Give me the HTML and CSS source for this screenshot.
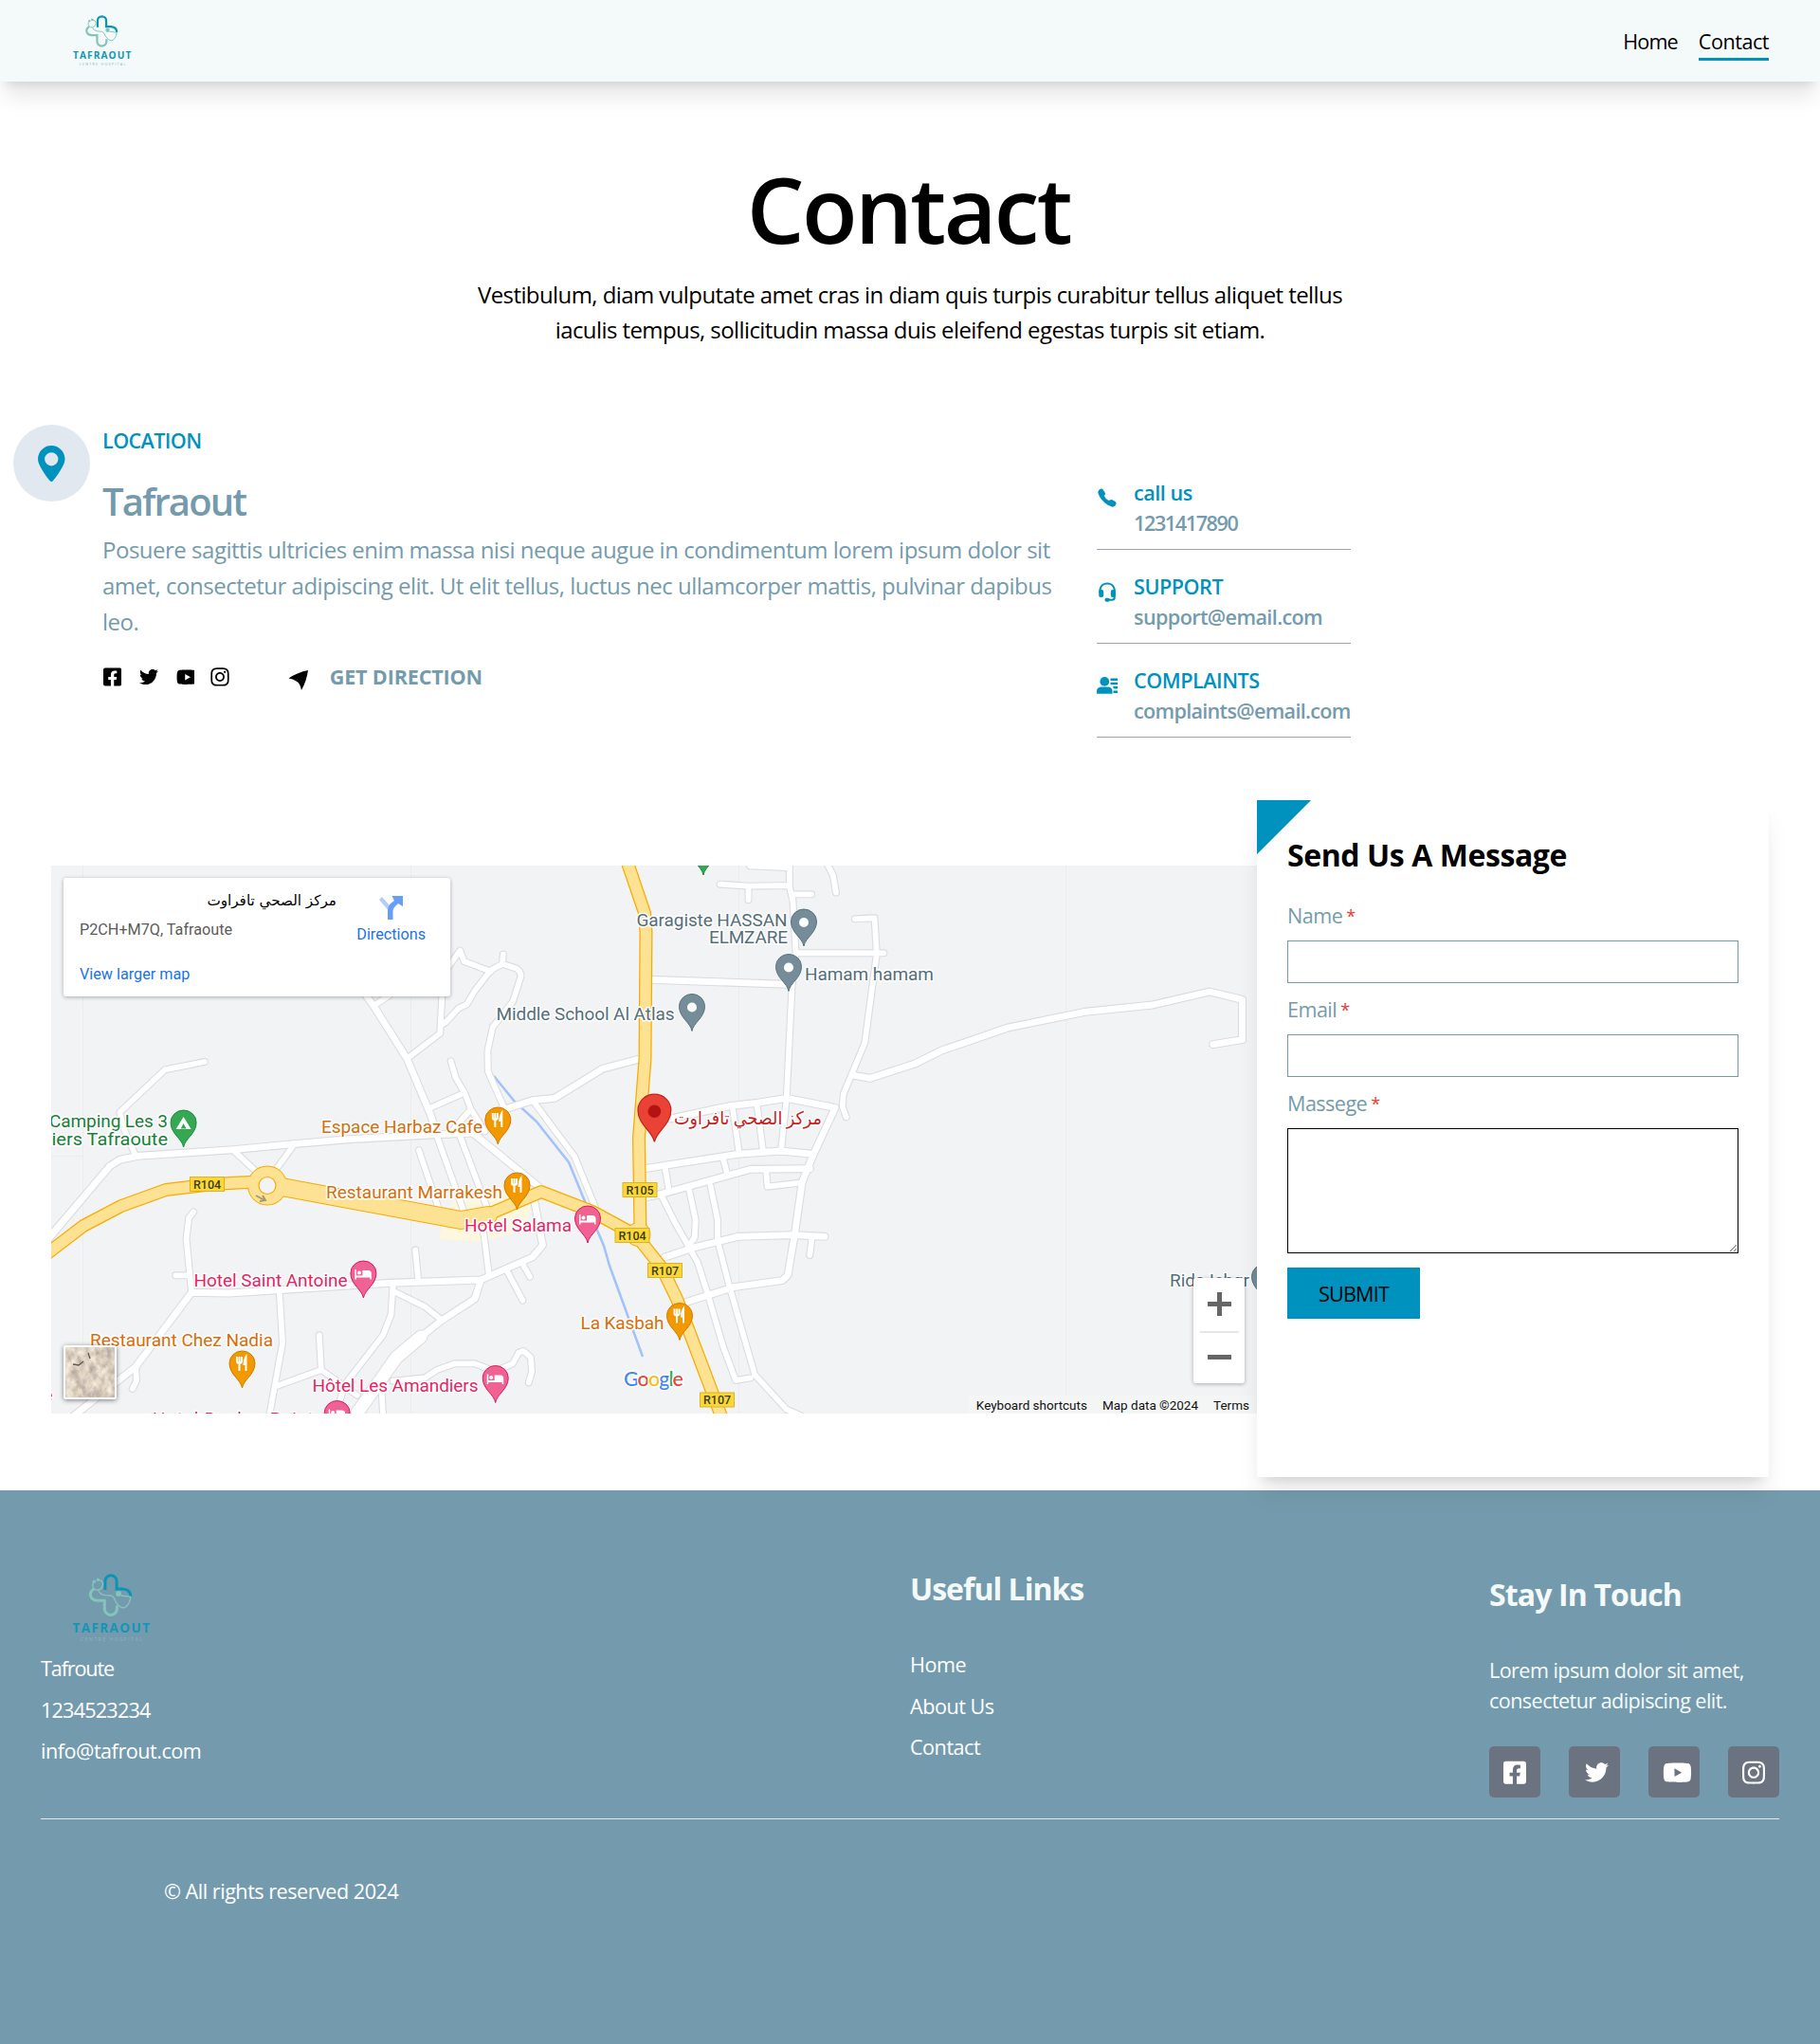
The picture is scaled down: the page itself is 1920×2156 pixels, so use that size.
FILE: index.html
```html
<!DOCTYPE html>
<html lang="en">
<head>
<meta charset="utf-8">
<title>Contact</title>
<link rel="stylesheet" href="styles.css">
</head>
<body>
<svg class="sprite" aria-hidden="true">
  <symbol id="logo" viewBox="225 85 255 225">
    <g fill="none" stroke-linecap="butt">
      <path stroke="#0c93b5" stroke-width="9" d="M334 140V112A18.500 18.500 0 0 1 371 112V137H392Q416 139 416 161"/>
      <path stroke="#84c5bb" stroke-width="9" d="M298 136Q280 150 290 165Q297 174 310 174H332V200A20 20 0 0 0 372 200V190"/>
      <path stroke="#84c5bb" stroke-width="4" d="M300 110Q286 130 304 140Q325 142 327 122Q326 108 312 108M312 142Q318 155 335 157L352 158Q362 160 368 178Q380 198 395 197Q412 190 416 162L385 158"/>
    </g>
    <g fill="#84c5bb"><circle cx="377" cy="152" r="9"/><circle cx="299" cy="113" r="5"/><circle cx="311" cy="107" r="5"/></g>
    <text x="229" y="276" class="logo-name" textLength="248">TAFRAOUT</text>
    <text x="255" y="303" class="logo-sub" textLength="198">CENTRE HOSPITAL</text>
  </symbol>
  <symbol id="fb" viewBox="0 0 448 512"><path d="M400 32H48A48 48 0 0 0 0 80v352a48 48 0 0 0 48 48h137.250V327.690h-63V256h63v-54.640c0-62.150 37-96.480 93.670-96.480 27.140 0 55.520 4.840 55.520 4.840v61h-31.270c-30.810 0-40.420 19.120-40.420 38.730V256h68.780l-11 71.690h-57.780V480H400a48 48 0 0 0 48-48V80a48 48 0 0 0-48-48z"/></symbol>
  <symbol id="tw" viewBox="0 0 512 512"><path d="M459.370 151.716c.325 4.548.325 9.097.325 13.645 0 138.720-105.583 298.558-298.558 298.558-59.452 0-114.680-17.219-161.137-47.106 8.447.974 16.568 1.299 25.340 1.299 49.055 0 94.213-16.568 130.274-44.832-46.132-.975-84.792-31.188-98.112-72.772 6.498.974 12.995 1.624 19.818 1.624 9.421 0 18.843-1.300 27.614-3.573-48.081-9.747-84.143-51.980-84.143-102.985v-1.299c13.969 7.797 30.214 12.670 47.431 13.319-28.264-18.843-46.781-51.005-46.781-87.391 0-19.492 5.197-37.360 14.294-52.954 51.655 63.675 129.300 105.258 216.365 109.807-1.624-7.797-2.599-15.918-2.599-24.040 0-57.828 46.782-104.934 104.934-104.934 30.213 0 57.502 12.670 76.670 33.137 23.715-4.548 46.456-13.320 66.599-25.340-7.798 24.366-24.366 44.833-46.132 57.827 21.117-2.273 41.584-8.122 60.426-16.243-14.292 20.791-32.161 39.308-52.628 54.253z"/></symbol>
  <symbol id="yt" viewBox="0 0 576 512"><path d="M549.655 124.083c-6.281-23.650-24.787-42.276-48.284-48.597C458.781 64 288 64 288 64S117.220 64 74.629 75.486c-23.497 6.322-42.003 24.947-48.284 48.597-11.412 42.867-11.412 132.305-11.412 132.305s0 89.438 11.412 132.305c6.281 23.650 24.787 41.500 48.284 47.821C117.220 448 288 448 288 448s170.780 0 213.371-11.486c23.497-6.321 42.003-24.171 48.284-47.821 11.412-42.867 11.412-132.305 11.412-132.305s0-89.438-11.412-132.305zm-317.510 213.508V175.185l142.739 81.205-142.739 81.201z"/></symbol>
  <symbol id="ig" viewBox="0 0 448 512"><path d="M224.100 141c-63.600 0-114.900 51.300-114.900 114.900s51.300 114.900 114.900 114.900S339 319.500 339 255.900 287.700 141 224.100 141zm0 189.600c-41.100 0-74.700-33.500-74.700-74.700s33.500-74.700 74.700-74.700 74.700 33.500 74.700 74.700-33.600 74.700-74.700 74.700zm146.400-194.300c0 14.900-12 26.800-26.800 26.800-14.900 0-26.800-12-26.800-26.800s12-26.800 26.800-26.800 26.800 12 26.800 26.800zm76.100 27.200c-1.700-35.900-9.900-67.700-36.200-93.900-26.200-26.200-58-34.400-93.900-36.200-37-2.100-147.900-2.100-184.900 0-35.800 1.700-67.600 9.900-93.900 36.100s-34.400 58-36.200 93.900c-2.100 37-2.100 147.900 0 184.900 1.700 35.900 9.900 67.700 36.200 93.900s58 34.400 93.900 36.200c37 2.100 147.900 2.100 184.900 0 35.900-1.700 67.700-9.900 93.900-36.200 26.200-26.200 34.400-58 36.200-93.900 2.100-37 2.100-147.800 0-184.800zM398.800 388c-7.800 19.600-22.900 34.700-42.600 42.600-29.500 11.700-99.500 9-132.100 9s-102.700 2.600-132.100-9c-19.600-7.800-34.700-22.900-42.600-42.600-11.700-29.500-9-99.500-9-132.100s-2.600-102.700 9-132.100c7.800-19.600 22.900-34.700 42.600-42.600 29.500-11.700 99.500-9 132.100-9s102.700-2.600 132.100 9c19.600 7.800 34.700 22.900 42.600 42.600 11.700 29.500 9 99.500 9 132.100s2.700 102.700-9 132.100z"/></symbol>
  <symbol id="pin-shape" viewBox="-16 -42 32 44" overflow="visible"><path d="M0 0C-1.500-9-13.500-14-13.500-26A13.500 13 0 1 1 13.500-26C13.500-14 1.500-9 0 0Z"/></symbol>
</svg>

<header class="topbar">
  <svg class="topbar-logo"><use href="#logo"/></svg>
  <nav class="nav">
    <a>Home</a>
    <a class="active">Contact</a>
  </nav>
</header>

<main>
  <section class="intro">
    <h1>Contact</h1>
    <p>Vestibulum, diam vulputate amet cras in diam quis turpis curabitur tellus aliquet tellus<br>iaculis tempus, sollicitudin massa duis eleifend egestas turpis sit etiam.</p>
  </section>

  <section class="info">
    <div class="badge"><svg viewBox="0 0 384 512"><path d="M215.700 499.200C267 435 384 279.400 384 192C384 86 298 0 192 0S0 86 0 192c0 87.400 117 243 168.300 307.200c12.300 15.300 35.100 15.300 47.400 0zM192 288a96 96 0 1 1 0-192 96 96 0 1 1 0 192z"/></svg></div>
    <div class="place">
      <h4>LOCATION</h4>
      <h2>Tafraout</h2>
      <p>Posuere sagittis ultricies enim massa nisi neque augue in condimentum lorem ipsum dolor sit<br>amet, consectetur adipiscing elit. Ut elit tellus, luctus nec ullamcorper mattis, pulvinar dapibus<br>leo.</p>
      <div class="links">
        <svg class="s-fb"><use href="#fb"/></svg>
        <svg class="s-tw"><use href="#tw"/></svg>
        <svg class="s-yt" viewBox="0 0 490 512"><use href="#yt" width="576" height="512"/></svg>
        <svg class="s-ig"><use href="#ig"/></svg>
        <svg class="s-dir" viewBox="0 0 21 21"><path d="M0.500 8.500Q10 2 21 0Q19.500 11 14 21Q12.500 13 8.500 11.500Q5 9 .5 8.500Z"/></svg>
        <a>GET DIRECTION</a>
      </div>
    </div>
    <ul class="contacts">
      <li>
        <svg viewBox="0 0 512 512"><path d="M391 480c-19.520 0-46.940-7.060-88-30-49.930-28-88.550-53.850-138.210-103.380C116.910 298.770 93.610 267.790 61 208.450c-36.840-67-30.560-102.120-23.540-117.130C45.820 73.380 58.160 62.650 74.110 52a176.300 176.300 0 0 1 28.640-15.200c1-.43 1.930-.84 2.760-1.210 4.950-2.230 12.450-5.600 21.950-2 6.340 2.380 12 7.250 20.860 16 18.170 17.920 43 57.830 52.160 77.430 6.150 13.210 10.220 21.930 10.230 31.710 0 11.450-5.760 20.280-12.750 29.810-1.310 1.790-2.610 3.500-3.870 5.160-7.610 10-9.280 12.890-8.180 18.050 2.230 10.370 18.860 41.240 46.190 68.510s57.310 42.850 67.720 45.070c5.380 1.150 8.330-.59 18.650-8.470 1.480-1.130 3-2.300 4.590-3.470 10.660-7.930 19.080-13.540 30.260-13.540h.06c9.730 0 18.060 4.220 31.860 11.180 18 9.080 59.110 33.590 77.140 51.780 8.770 8.840 13.660 14.480 16.050 20.810 3.600 9.530.21 17-2 22-.37.830-.78 1.740-1.210 2.750a176.490 176.490 0 0 1-15.290 28.580c-10.630 15.900-21.400 28.210-39.380 36.580A67.420 67.420 0 0 1 391 480z"/></svg>
        <div><b>call us</b><span class="digits">1231417890</span></div>
      </li>
      <li>
        <svg viewBox="0 0 22 22"><path d="M3.500 12V8.500A7.700 7.200 0 0 1 18.700 8.500V17.500Q18.700 19.700 16 19.700H12" fill="none" stroke="#0092bf" stroke-width="2.100"/><rect x="2.200" y="9" width="5" height="8" rx="2"/><rect x="14.800" y="9" width="5" height="8" rx="2"/><rect x="8.400" y="17.800" width="5.500" height="4" rx="2"/></svg>
        <div><b>SUPPORT</b><span>support@email.com</span></div>
      </li>
      <li>
        <svg viewBox="0 0 22 22"><circle cx="8.300" cy="6.900" r="4.900"/><path d="M0 19.700V17Q0 12.500 5.500 12.500H11Q16.500 12.500 16.500 17V19.700Z"/><path d="M14.500 3.500H22V6H14.500ZM14.500 7.700H22V10.200H14.500ZM17 12H22V14.500H18ZM17.500 16.500H22V19H17.500Z"/></svg>
        <div><b>COMPLAINTS</b><span class="snug">complaints@email.com</span></div>
      </li>
    </ul>
  </section>

  <section class="reach">
    <div class="map">
      <svg class="map-canvas" viewBox="54 913 1272 578" preserveAspectRatio="none">
        <defs>
          <g id="lanes">
            <g transform="translate(40 900) scale(.42092 .33333)">
              <path d="M1025 365L1058 308L1068 342L1135 374M1166 320L1164 350L1135 370L1095 435L1075 478L1055 490L1022 535L1010 545M1164 350L1200 365Q1215 380 1208 400L1190 470L1140 550L1127 625L1128 690L1170 810M1013 445L1008 570L930 645M845 480L880 450M418 660L318 685L205 820L215 870L245 958M985 805L1065 760M1035 658L1047 710L1070 760L1085 810L1120 880M1085 810L1030 890M1240 782L1345 960L1400 1130"/>
            </g>
            <g transform="translate(40 1190) scale(.42092 .33333)">
              <path d="M490 70L545 135M640 55L600 125M390 265L378 285L372 350L385 520M345 466L375 466M245 755L247 800L237 825M605 512L613 680L580 910M600 815L710 765L705 655M710 765L800 845M890 495L885 590L865 655L770 810L755 870M890 515L970 565L1010 605M890 800L970 790L1000 765L1045 745L1095 745L1145 770L1190 745L1205 710L1217 705L1235 725L1238 770L1230 805M862 840L865 910M946 385L953 480M955 70L1003 250M1000 25L1068 265M1055 15L1125 250M1115 310L1130 460M1175 450L1215 545M1215 430L1233 470M30 340L180 120L205 100"/>
            </g>
            <g transform="translate(640 900) scale(.44643 .33333)">
              <path d="M338 40L425 45M268 98L335 104L432 102M335 104L335 148M440 130L484 130M520 30L535 70L542 125M587 208L633 205L638 320L610 600L560 760L557 800L566 835M450 315L655 316M432 30L432 105L440 150L447 315L438 420L425 775L412 945M297 800L313 950M355 795L370 945"/>
            </g>
            <g transform="translate(640 1190) scale(.44643 .33333)">
              <path d="M275 95L285 145M138 125L147 195M377 140L380 185L462 172M130 215L160 295L215 425L240 530L275 690L305 798L340 790M195 195L210 290L208 345L195 370M245 180L262 290L262 355L290 500L350 780L425 890L460 910M485 345L480 402"/>
            </g>
          </g>
          <g id="streets">
            <g transform="translate(40 900) scale(.42092 .33333)">
              <path d="M820 445L845 490L925 650L985 830L1000 890M1170 810L1240 782L1295 775L1415 682L1505 652"/>
            </g>
            <g transform="translate(40 1190) scale(.42092 .33333)">
              <path d="M30 345L180 120L205 100L250 88L490 68L640 50L780 35L1000 20L1090 15L1255 185M90 910L190 810L245 755L385 520L480 522L605 512L880 490L1110 480L1240 408L1265 370L1245 235M1110 480L1095 540L1010 610L960 660"/>
            </g>
            <g transform="translate(640 900) scale(.44643 .33333)">
              <path d="M103 400L430 415M580 702L623 712L730 665L790 625L948 552L1130 502L1290 480L1425 438L1502 463L1502 590L1433 605M150 840L290 800L355 790L425 775L540 805L488 955L462 1040L445 1200L428 1335L415 1352L300 1373L190 1420"/>
            </g>
            <g transform="translate(640 1190) scale(.44643 .33333)">
              <path d="M90 128L310 82L410 72L488 82M95 218L130 208L340 130L480 128M138 408L200 380L310 343L440 338L515 343"/>
            </g>
          </g>
          <path id="avenue" d="M444 1410L418 1432L377 1490"/>
          <g id="road">
            <path d="M50 1322L88 1293L128 1272L175 1255L225 1249L270 1246.500"/>
            <path d="M515 1281L571 1257L625 1278L671 1303L698 1337L714 1370L761 1494"/>
            <path d="M662 910L680 963L681.500 983L680.500 1117L674 1200L675.500 1300"/>
          </g>
          <path id="highway" d="M292 1251L486 1287L515 1282"/>
        </defs>
        <rect x="54" y="913" width="1272" height="578" fill="#f1f3f4"/>
        <path d="M87.500 913V1491M433.500 913V1491M779.500 913V1491M1124.500 913V1491M54 1219.500H87" stroke="#eaecee"/>
        <path d="M486 1257L530 1252L560 1270L556 1297L507 1310L463 1307L469 1280Z" fill="#fef7e0"/>
        <path class="river" d="M521 1135L543 1162L566 1183L600 1226L619 1272L637 1314L643 1335L678 1431"/>
        <use href="#lanes" class="lane-edge"/><use href="#streets" class="street-edge"/><use href="#avenue" class="avenue-edge"/>
        <use href="#lanes" class="lane"/><use href="#streets" class="street"/><use href="#avenue" class="avenue"/>
        <use href="#highway" class="highway-edge"/><use href="#road" class="road-edge"/>
        <circle cx="282" cy="1250.500" r="21" fill="#f9ab00"/><circle cx="673.500" cy="1302" r="13" fill="#f9ab00"/>
        <circle cx="282" cy="1250.500" r="20" fill="#fde293"/><circle cx="673.500" cy="1302" r="12" fill="#fde293"/>
        <use href="#highway" class="highway"/><use href="#road" class="road"/>
        <circle cx="282" cy="1250.500" r="9" fill="#f1f3f4" stroke="#f9ab00" stroke-width="1.200"/>
        <path d="M270 1261L279 1266M274 1267L280 1266L277 1261" stroke="#a59a72" stroke-width="2" fill="none"/>

        <g class="shields">
          <rect x="200.500" y="1241.500" width="36" height="15"/><text x="218.500" y="1253.500">R104</text>
          <rect x="657" y="1247.500" width="36" height="15"/><text x="675" y="1259.500">R105</text>
          <rect x="649" y="1295.500" width="36" height="15"/><text x="667" y="1307.500">R104</text>
          <rect x="683.500" y="1332.500" width="36" height="15"/><text x="701.500" y="1344.500">R107</text>
          <rect x="738.500" y="1469" width="36" height="15"/><text x="756.500" y="1481">R107</text>
        </g>

        <g class="labels slate">
          <text x="671.500" y="976.500" textLength="159">Garagiste HASSAN</text><text x="748" y="995.300" textLength="83">ELMZARE</text>
          <text x="849" y="1033.500" textLength="136">Hamam hamam</text><text x="523.500" y="1075.700" textLength="188">Middle School Al Atlas</text>
          <text x="1234" y="1356.500" textLength="84">Rida Ichgr</text>
        </g>
        <g class="labels green"><text x="52" y="1188.500" textLength="125">Camping Les 3</text><text x="37" y="1207.500" textLength="140" lengthAdjust="spacingAndGlyphs">miers Tafraoute</text></g>
        <g class="labels orange">
          <text x="339" y="1195" textLength="170">Espace Harbaz Cafe</text><text x="344" y="1264" textLength="186">Restaurant Marrakesh</text>
          <text x="95" y="1419.700" textLength="193">Restaurant Chez Nadia</text><text x="612.500" y="1401.500" textLength="88">La Kasbah</text>
        </g>
        <g class="labels pink">
          <text x="490" y="1299" textLength="113">Hotel Salama</text><text x="204.500" y="1356.500" textLength="162">Hotel Saint Antoine</text>
          <text x="329.500" y="1467.700" textLength="175">Hôtel Les Amandiers</text><text x="161" y="1502.500" textLength="170">Hotel Rocher Peint</text>
          <text x="45.500" y="1478">e</text>
        </g>
        <text class="labels red" x="789" y="1185.500" text-anchor="middle" textLength="156" lengthAdjust="spacingAndGlyphs">مركز الصحي تافراوت</text>

        <g class="pins">
          <g fill="#748d98" stroke="#5b727d">
            <g transform="translate(848 998)"><use href="#pin-shape" x="-16" y="-42" width="32" height="44"/><circle cy="-25" r="5"/></g>
            <g transform="translate(832 1045.500)"><use href="#pin-shape" x="-16" y="-42" width="32" height="44"/><circle cy="-25" r="5"/></g>
            <g transform="translate(730 1087.500)"><use href="#pin-shape" x="-16" y="-42" width="32" height="44"/><circle cy="-25" r="5"/></g>
            <g transform="translate(1334 1372.500)"><use href="#pin-shape" x="-16" y="-42" width="32" height="44"/></g>
          </g>
          <g fill="#34a853" stroke="#1e8e3e">
            <g transform="translate(193.600 1210)"><use href="#pin-shape" x="-16" y="-42" width="32" height="44"/><path d="M-8-19L0-32L8-19ZM-3-19.500H3L0-25Z" fill="#fff" fill-rule="evenodd" stroke="none"/></g>
            <g transform="translate(742 923)"><use href="#pin-shape" x="-16" y="-42" width="32" height="44"/></g>
          </g>
          <g fill="#f29900" stroke="#d37a00">
            <g transform="translate(525.300 1207)"><use href="#pin-shape" x="-16" y="-42" width="32" height="44"/><path class="fork" d="M-5.500-33V-28Q-5.500-26-3-26V-18M-.5-33V-28Q-.5-26-3-26V-33M4-18V-33Q2-30 2-25H4"/></g>
            <g transform="translate(545.500 1276)"><use href="#pin-shape" x="-16" y="-42" width="32" height="44"/><path class="fork" d="M-5.500-33V-28Q-5.500-26-3-26V-18M-.5-33V-28Q-.5-26-3-26V-33M4-18V-33Q2-30 2-25H4"/></g>
            <g transform="translate(255.500 1464)"><use href="#pin-shape" x="-16" y="-42" width="32" height="44"/><path class="fork" d="M-5.500-33V-28Q-5.500-26-3-26V-18M-.5-33V-28Q-.5-26-3-26V-33M4-18V-33Q2-30 2-25H4"/></g>
            <g transform="translate(717 1413.500)"><use href="#pin-shape" x="-16" y="-42" width="32" height="44"/><path class="fork" d="M-5.500-33V-28Q-5.500-26-3-26V-18M-.5-33V-28Q-.5-26-3-26V-33M4-18V-33Q2-30 2-25H4"/></g>
          </g>
          <g fill="#f06292" stroke="#d81b60">
            <g transform="translate(620 1311)"><use href="#pin-shape" x="-16" y="-42" width="32" height="44"/><path class="bed" d="M-9-30H-7.500V-23.500H-1V-29H5Q8.500-29 8.500-25.500V-19.500H7V-21.500H-7.500V-19.500H-9ZM-6.500-26.500A2 2 0 1 1-2.500-26.500A2 2 0 1 1-6.500-26.500"/></g>
            <g transform="translate(383.400 1369)"><use href="#pin-shape" x="-16" y="-42" width="32" height="44"/><path class="bed" d="M-9-30H-7.500V-23.500H-1V-29H5Q8.500-29 8.500-25.500V-19.500H7V-21.500H-7.500V-19.500H-9ZM-6.500-26.500A2 2 0 1 1-2.500-26.500A2 2 0 1 1-6.500-26.500"/></g>
            <g transform="translate(522.700 1479.500)"><use href="#pin-shape" x="-16" y="-42" width="32" height="44"/><path class="bed" d="M-9-30H-7.500V-23.500H-1V-29H5Q8.500-29 8.500-25.500V-19.500H7V-21.500H-7.500V-19.500H-9ZM-6.500-26.500A2 2 0 1 1-2.500-26.500A2 2 0 1 1-6.500-26.500"/></g>
            <g transform="translate(355.700 1516.500)"><use href="#pin-shape" x="-16" y="-42" width="32" height="44"/><path class="bed" d="M-9-30H-7.500V-23.500H-1V-29H5Q8.500-29 8.500-25.500V-19.500H7V-21.500H-7.500V-19.500H-9ZM-6.500-26.500A2 2 0 1 1-2.500-26.500A2 2 0 1 1-6.500-26.500"/></g>
          </g>
          <g transform="translate(690.400 1204.500) scale(1.290)" fill="#ea4335" stroke="#c5221f"><use href="#pin-shape" x="-16" y="-42" width="32" height="44"/><circle class="core" cy="-25" r="5.300"/></g>
        </g>

        <text class="google" x="658" y="1462" textLength="63"><tspan fill="#4285f4">G</tspan><tspan fill="#ea4335">o</tspan><tspan fill="#fbbc04">o</tspan><tspan fill="#4285f4">g</tspan><tspan fill="#34a853">l</tspan><tspan fill="#ea4335">e</tspan></text>
      </svg>

      <div class="place-card">
        <div class="place-text">
          <strong dir="rtl">مركز الصحي تافراوت</strong>
          <span>P2CH+M7Q, Tafraoute</span>
          <a>View larger map</a>
        </div>
        <div class="place-dir">
          <svg viewBox="0 0 25 26"><path d="M3 2L11 11V16L8.500 15L0 5Z" fill="#b3cdfd"/><path d="M9 26V16Q9 12 12 9L16 6L13.500 1H25V12L20 9L16 13Q14.500 15 14.500 17V26Z" fill="#669df6"/></svg>
          <a>Directions</a>
        </div>
      </div>
      <div class="satellite"><svg viewBox="0 0 52 53" preserveAspectRatio="none">
        <filter id="terrain" x="0" y="0" width="1" height="1">
          <feTurbulence type="fractalNoise" baseFrequency=".12 .09" numOctaves="4" seed="7"/>
          <feColorMatrix values=".9 0 0 0 .25  .85 0 0 0 .19  .7 .1 0 0 .12  0 0 0 0 1"/>
        </filter>
        <rect width="52" height="53" fill="#b3a08c" filter="url(#terrain)"/>
        <path d="M8 18L14 19L19 15M24 6L26 12" fill="none" stroke="#5f564d" stroke-width="1.300"/>
      </svg></div>
      <div class="zoom"><i class="plus"></i><hr><i class="minus"></i></div>
      <div class="credits"><span>Keyboard shortcuts</span><span>Map data ©2024</span><span>Terms</span></div>
    </div>

    <form class="form">
      <h3>Send Us A Message</h3>
      <label>Name <em>*</em></label>
      <input type="text">
      <label>Email <em>*</em></label>
      <input type="text">
      <label>Massege <em>*</em></label>
      <textarea></textarea>
      <button type="button">SUBMIT</button>
    </form>
  </section>
</main>

<footer class="footer">
  <div class="footer-cols">
    <div class="f-brand">
      <svg class="footer-logo"><use href="#logo"/></svg>
      <p class="tight">Tafroute</p>
      <p class="nums">1234523234</p>
      <p>info@tafrout.com</p>
    </div>
    <div class="f-links">
      <h3>Useful Links</h3>
      <a>Home</a>
      <a>About Us</a>
      <a>Contact</a>
    </div>
    <div class="f-social">
      <h3>Stay In Touch</h3>
      <p>Lorem ipsum dolor sit amet,<br>consectetur adipiscing elit.</p>
      <div class="tiles">
        <a><svg class="t-fb"><use href="#fb"/></svg></a>
        <a><svg class="t-tw"><use href="#tw"/></svg></a>
        <a><svg class="t-yt"><use href="#yt"/></svg></a>
        <a><svg class="t-fb"><use href="#ig"/></svg></a>
      </div>
    </div>
  </div>
  <p class="copy">© All rights reserved 2024</p>
</footer>
</body>
</html>
```
FILE: styles.css
```css
* { box-sizing: border-box; margin: 0; padding: 0; }
body {
  font: 400 21.6px/32.4px "Open Sans", "Noto Sans", sans-serif;
  letter-spacing: -0.0225em;
  color: #000;
  background: #fff;
}
svg { display: block; }
.sprite { position: absolute; width: 0; height: 0; }
.logo-name { font: 700 41px "Open Sans", sans-serif; letter-spacing: 0; fill: #1595b5; }
.logo-sub { font: 400 15px "Open Sans", sans-serif; letter-spacing: 0; fill: #84b5c0; }

/* header */
.topbar {
  position: relative;
  display: flex;
  justify-content: space-between;
  height: 86px;
  padding: 0 54px 0 76px;
  background: #f4fafa;
  box-shadow: 0 20px 25px -5px rgba(0, 0, 0, .1), 0 8px 10px -6px rgba(0, 0, 0, .1);
}
.topbar-logo { width: 63px; height: 56px; margin-top: 15px; }
.nav { display: flex; gap: 22px; padding-top: 28px; }
.nav a { height: 36px; border-bottom: 3px solid transparent; }
.nav a:first-child { letter-spacing: -0.04em; }
.nav .active { border-color: #0092bf; }

/* intro */
.intro { padding-top: 86px; height: 362px; text-align: center; }
.intro h1 { padding-right: 3px; font-size: 96px; line-height: 96px; font-weight: 600; letter-spacing: -0.0273em; margin-bottom: 24px; }
.intro p { font-size: 24px; line-height: 37px; letter-spacing: -0.0242em; }

/* location and contact details */
.info {
  display: grid;
  grid-template-columns: 80px 1048px 268px;
  padding-left: 14px;
  height: 396px;
}
.badge { display: flex; align-items: center; justify-content: center; width: 81px; height: 81px; border-radius: 50%; background: #e2e8f0; }
.badge svg { width: 28.500px; height: 38px; fill: #0092bf; }
.place { padding: 1px 0 0 14px; color: #749bad; white-space: nowrap; }
.place h4 { font-size: 21.6px; line-height: 32px; font-weight: 600; letter-spacing: -0.028em; color: #0092bf; margin-bottom: 28px; }
.place h2 { font-size: 40px; line-height: 40px; font-weight: 600; letter-spacing: -0.048em; margin-bottom: 12px; }
.place p { font-size: 24px; line-height: 38px; letter-spacing: -0.0205em; margin-bottom: 23px; }
.links { display: flex; align-items: center; height: 32px; padding-left: 1px; }
.links a { font-weight: 700; letter-spacing: -0.008em; }
.s-fb { width: 19.200px; height: 22px; margin-right: 19px; }
.s-tw { width: 20px; height: 20px; margin-right: 18.500px; }
.s-yt { width: 19.500px; height: 20.500px; margin-right: 16.500px; overflow: hidden; }
.s-ig { width: 20px; height: 22px; margin-right: 62px; }
.s-dir { width: 21px; height: 21px; margin: 6px 23px 0 0; }
.contacts { list-style: none; padding: 55px 0 0 15px; }
.contacts li {
  display: flex;
  width: 268px;
  height: 77px;
  margin-bottom: 22px;
  padding-top: 1px;
  border-bottom: 1px solid #9ca3af;
  font-weight: 600;
  white-space: nowrap;
}
.contacts svg { flex: none; width: 22px; height: 22px; margin: 10px 17px 0 0; fill: #0092bf; }
.contacts b { display: block; font-weight: 600; color: #0092bf; letter-spacing: -0.022em; }
.contacts span { display: block; color: #749bad; letter-spacing: -0.0285em; }
.contacts .digits { letter-spacing: -0.065em; }
.contacts .snug { letter-spacing: -0.0325em; }

/* map and form */
.reach { display: flex; padding: 0 54px; height: 728px; }
.map { position: relative; flex: none; width: 1272px; height: 578px; margin-top: 69px; overflow: hidden; font-family: Roboto, sans-serif; letter-spacing: 0; }
.map-canvas { width: 1272px; height: 578px; }
.map-canvas use, .map-canvas path { vector-effect: non-scaling-stroke; }
.lane-edge, .street-edge, .avenue-edge, .lane, .street, .avenue, .road-edge, .road, .highway-edge, .highway { fill: none; stroke-linecap: round; stroke-linejoin: round; }
.lane-edge, .street-edge, .avenue-edge { stroke: #dadce0; }
.lane-edge { stroke-width: 8px; }
.street-edge { stroke-width: 9px; }
.avenue-edge { stroke-width: 15px; }
.lane, .street, .avenue { stroke: #fff; }
.lane { stroke-width: 5.800px; }
.street { stroke-width: 6.800px; }
.avenue { stroke-width: 13px; }
.road-edge { stroke: #f9ab00; stroke-width: 14px; }
.road { stroke: #fde293; stroke-width: 11.500px; }
.highway-edge { stroke: #f9ab00; stroke-width: 20px; }
.highway { stroke: #fde293; stroke-width: 18px; }
.river { fill: none; stroke: #a1c2fa; stroke-width: 2.500px; }
.shields rect { fill: #fdd835; stroke: #d9b32c; }
.shields text { font: 500 12.5px Roboto, sans-serif; fill: #3c3c1c; text-anchor: middle; }
.labels { font: 400 19px Roboto, "DejaVu Sans", sans-serif; paint-order: stroke; stroke: #fff; stroke-width: 3px; stroke-linejoin: round; }
.slate { fill: #546e7a; }
.green { fill: #188038; }
.orange { fill: #d56e0c; }
.pink { fill: #e91e63; }
.red { fill: #c5221f; }
.pins circle { fill: #fff; stroke: none; }
.pins .core { fill: #b31412; }
.fork { fill: none; stroke: #fff; stroke-width: 2px; }
.bed { fill: #fff; stroke: none; }
.google { font: 500 21.5px Lato, sans-serif; paint-order: stroke; stroke: #fff; stroke-width: 3px; }

.place-card {
  position: absolute;
  left: 13px;
  top: 13px;
  display: flex;
  justify-content: space-between;
  width: 408px;
  height: 125px;
  padding: 0 26px 0 17px;
  background: #fff;
  border-radius: 3px;
  box-shadow: 0 1px 4px rgba(0, 0, 0, .3);
  font-size: 16.2px;
  line-height: 20px;
}
.place-text { width: 271px; padding-top: 13px; }
.place-text strong { display: block; height: 32px; font: 400 15.2px/22px "DejaVu Sans", sans-serif; }
.place-text span { display: block; color: #5b5b5b; margin-bottom: 27px; }
.place-card a { color: #1a73e8; }
.place-text a { display: block; }
.place-dir { padding-top: 18px; text-align: center; }
.place-dir svg { width: 25px; height: 26px; margin: 0 auto 6px; }
.satellite { position: absolute; left: 13px; top: 506px; width: 56px; height: 57px; border: 2px solid #fff; border-radius: 3px; box-shadow: 0 1px 5px rgba(0, 0, 0, .5); overflow: hidden; }
.satellite svg { width: 52px; height: 53px; }
.zoom {
  position: absolute;
  left: 1205px;
  top: 435px;
  display: flex;
  flex-direction: column;
  align-items: center;
  justify-content: space-between;
  width: 54px;
  height: 111px;
  padding: 15px 0 25px;
  background: #fff;
  border-radius: 3px;
  box-shadow: 0 1px 4px rgba(0, 0, 0, .3);
}
.zoom i { display: block; width: 25px; }
.zoom .plus { height: 25px; background: linear-gradient(#666, #666) center / 100% 5px no-repeat, linear-gradient(#666, #666) center / 5px 100% no-repeat; }
.zoom .minus { height: 5px; background: #666; }
.zoom hr { width: 41px; height: 2px; border: 0; background: #e6e6e6; margin-bottom: 8px; }
.credits {
  position: absolute;
  right: 0;
  bottom: 0;
  display: flex;
  justify-content: flex-end;
  gap: 16px;
  width: 305px;
  height: 19px;
  padding-right: 8px;
  background: #f4f5f5;
  color: #111;
  font-size: 13.5px;
  line-height: 20px;
  white-space: nowrap;
}
.form {
  position: relative;
  flex: none;
  width: 540px;
  height: 714px;
  padding: 40px 32px 0;
  background: linear-gradient(135deg, #0092bf 40px, transparent 40.800px) #fff;
  box-shadow: 0 20px 25px -5px rgba(0, 0, 0, .1), 0 8px 10px -6px rgba(0, 0, 0, .1);
}
.form h3 { font-size: 32px; line-height: 36px; font-weight: 700; letter-spacing: -0.0131em; margin-bottom: 30px; white-space: nowrap; }
.form label { display: block; line-height: 32px; height: 41.500px; color: #749bad; letter-spacing: -0.025em; }
.form em { font-style: normal; font-size: 18px; vertical-align: 1px; line-height: 1; margin-left: -1px; color: #e53935; }
.form input, .form textarea { display: block; width: 476px; height: 45.500px; border: 1px solid #749bad; background: #fff; outline: 0; margin-bottom: 12px; }
.form textarea { height: 132.500px; border-color: #000; margin-bottom: 15px; resize: vertical; }
.form button { display: block; width: 140px; height: 54px; border: 0; background: #0092bf; font: inherit; line-height: 32px; letter-spacing: -0.037em; padding-top: 1px; }

/* footer */
.footer { height: 584px; padding: 87px 43px 0; background: #749bad; color: #fff; }
.footer-cols { display: flex; height: 260px; border-bottom: 1px solid #e5e7eb; }
.f-brand { width: 917px; }
.footer-logo { width: 84px; height: 74px; margin: 0 0 11px 32px; }
.f-brand p { line-height: 32px; margin-bottom: 11.700px; }
.f-brand .tight { letter-spacing: -0.052em; }
.f-brand .nums { letter-spacing: -0.0366em; }
.footer h3 { font-size: 32px; line-height: 40px; font-weight: 700; letter-spacing: -0.027em; white-space: nowrap; color: #f4fafa; }
.f-links { width: 611px; }
.f-links h3 { margin: -3px 0 44px; letter-spacing: -0.031em; }
.f-links a { display: block; line-height: 32px; margin-bottom: 11.700px; }
.f-social { width: 306px; }
.f-social h3 { margin: 3px 0 44px; }
.f-social p { color: #f4fafa; margin-bottom: 31px; letter-spacing: -0.0265em; white-space: nowrap; }
.tiles { display: flex; justify-content: space-between; }
.tiles a { display: flex; align-items: center; justify-content: center; width: 54px; height: 54px; border-radius: 5px; background: #6b7280; }
.tiles svg { fill: #fff; }
.t-fb { width: 24px; height: 27.400px; margin-top: 1px; }
.t-tw { width: 25px; height: 25px; margin: 1px 0 0 4px; }
.t-yt { width: 31px; height: 27.400px; margin: 1px 0 0 6px; }
.copy { padding: 60px 0 0 130px; }
```
